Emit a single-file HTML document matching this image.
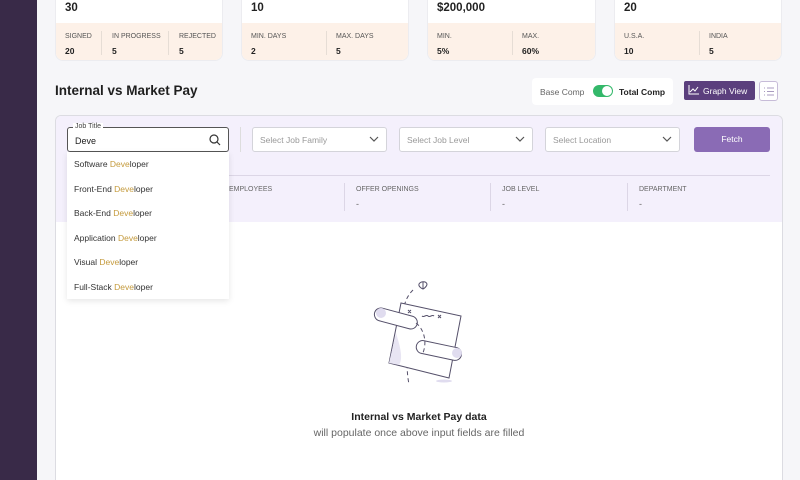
<!DOCTYPE html>
<html style="width:800px;height:480px;overflow:hidden"><head><meta charset="utf-8"><style>
*{box-sizing:border-box;margin:0;padding:0}
body{width:800px;height:480px;overflow:hidden;background:#f6f6f9;font-family:"Liberation Sans",sans-serif;color:#222;position:relative}
.abs{position:absolute}
.side{left:0;top:0;width:37px;height:480px;background:#392a48}
.card{background:#fff;border:1px solid #ececf0;border-top:none;border-radius:0 0 8px 8px;overflow:hidden;top:-10px;height:71px}
.card .v{position:absolute;left:9px;top:12px;font-size:11.5px;font-weight:bold;color:#222}
.card .b{position:absolute;left:0;right:0;top:33px;bottom:0;background:#fdf1e8}
.card .c{position:absolute;top:10px;font-size:7px;color:#555}
.card .c b{display:block;font-size:8.5px;color:#222;margin-top:6px}
.card .s{position:absolute;top:8px;width:1px;height:24px;background:#e6ddd5}
.h{left:55px;top:83px;font-size:13.5px;font-weight:bold;color:#1f1f1f}
.sel{background:#fff;border:1px solid #d4d4da;border-radius:3px;height:25px;top:127px;font-size:8.5px;color:#999;padding:7px 7px}
.sel svg{position:absolute;right:7px;top:8px}
.lab{font-size:7px;color:#666}
.lab b{display:block;font-weight:normal;color:#666;font-size:9px;margin-top:6px}
.dd div{height:24.6px;padding-left:7px;font-size:8.5px;color:#333;line-height:24px}
.dd span{color:#c49a3c}
</style></head><body>
<div class="abs side"></div>
<div class="abs card" style="left:55px;width:168px"><div class="v">30</div><div class="b">
<div class="c" style="left:9px">SIGNED<b>20</b></div><div class="s" style="left:45px"></div>
<div class="c" style="left:56px">IN PROGRESS<b>5</b></div><div class="s" style="left:112px"></div>
<div class="c" style="left:123px">REJECTED<b>5</b></div></div></div>
<div class="abs card" style="left:241px;width:168px"><div class="v">10</div><div class="b">
<div class="c" style="left:9px">MIN. DAYS<b>2</b></div><div class="s" style="left:84px"></div>
<div class="c" style="left:94px">MAX. DAYS<b>5</b></div></div></div>
<div class="abs card" style="left:427px;width:169px"><div class="v">$200,000</div><div class="b">
<div class="c" style="left:9px">MIN.<b>5%</b></div><div class="s" style="left:84px"></div>
<div class="c" style="left:94px">MAX.<b>60%</b></div></div></div>
<div class="abs card" style="left:614px;width:168px"><div class="v">20</div><div class="b">
<div class="c" style="left:9px">U.S.A.<b>10</b></div><div class="s" style="left:84px"></div>
<div class="c" style="left:94px">INDIA<b>5</b></div></div></div>

<div class="abs h">Internal vs Market Pay</div>
<div class="abs" style="left:532px;top:78px;width:141px;height:27px;background:#fff;border-radius:4px"></div>
<div class="abs" style="left:540px;top:87px;font-size:8.5px;color:#666">Base Comp</div>
<div class="abs" style="left:593px;top:85px;width:20px;height:12px;border-radius:6px;background:#34b86a"><div style="position:absolute;right:1px;top:1px;width:10px;height:10px;border-radius:5px;background:#fff"></div></div>
<div class="abs" style="left:619px;top:87px;font-size:8.5px;color:#222;font-weight:bold">Total Comp</div>
<div class="abs" style="left:684px;top:81px;width:71px;height:19px;background:#5b3f7d;border-radius:2px;color:#fff;font-size:8.5px;padding:5px 0 0 19px">Graph View
<svg class="abs" style="left:4px;top:4px" width="11" height="10" viewBox="0 0 11 10" fill="none" stroke="#fff" stroke-width="1"><path d="M1 0V9H11M2 7L5 4L7 6L10 2"/></svg></div>
<div class="abs" style="left:759px;top:81px;width:19px;height:20px;border:1px solid #c7bcd8;border-radius:3px;background:#fff">
<svg style="position:absolute;left:4px;top:5px" width="10" height="9" viewBox="0 0 10 9" stroke="#a99bc0" stroke-width="1"><path d="M0 1H1M3 1H10M0 4.5H1M3 4.5H10M0 8H1M3 8H10"/></svg></div>

<div class="abs" style="left:55px;top:115px;width:728px;height:365px;background:#fff;border:1px solid #dcdce2;border-bottom:none;border-radius:6px 6px 0 0;overflow:hidden">
<div style="position:absolute;left:0;top:0;right:0;height:106px;background:#f4f0fc"></div>
<div style="position:absolute;left:13px;right:12px;top:59px;height:1px;background:#dcd6e6"></div>
</div>
<div class="abs lab" style="left:229px;top:186px">EMPLOYEES<b></b></div>
<div class="abs" style="left:344px;top:183px;width:1px;height:28px;background:#dcd6e6"></div>
<div class="abs lab" style="left:356px;top:186px">OFFER OPENINGS<b>-</b></div>
<div class="abs" style="left:490px;top:183px;width:1px;height:28px;background:#dcd6e6"></div>
<div class="abs lab" style="left:502px;top:186px">JOB LEVEL<b>-</b></div>
<div class="abs" style="left:627px;top:183px;width:1px;height:28px;background:#dcd6e6"></div>
<div class="abs lab" style="left:639px;top:186px">DEPARTMENT<b>-</b></div>

<div class="abs" style="left:67px;top:127px;width:162px;height:25px;background:#fff;border:1px solid #555;border-radius:3px;font-size:9px;color:#222;padding:8px 7px">Deve
<svg class="abs" style="right:7px;top:6px" width="12" height="12" viewBox="0 0 12 12" fill="none" stroke="#333" stroke-width="1.2"><circle cx="5" cy="5" r="4"/><path d="M8 8L11 11"/></svg></div>
<div class="abs" style="left:73px;top:123px;background:#fff;padding:0 2px;font-size:7px;color:#444">Job Title</div>
<div class="abs" style="left:240px;top:127px;width:1px;height:25px;background:#ddd"></div>
<div class="abs sel" style="left:252px;width:135px">Select Job Family<svg width="10" height="7" viewBox="0 0 10 7" fill="none" stroke="#555" stroke-width="1.2"><path d="M1 1L5 5L9 1"/></svg></div>
<div class="abs sel" style="left:399px;width:134px">Select Job Level<svg width="10" height="7" viewBox="0 0 10 7" fill="none" stroke="#555" stroke-width="1.2"><path d="M1 1L5 5L9 1"/></svg></div>
<div class="abs sel" style="left:545px;width:135px">Select Location<svg width="10" height="7" viewBox="0 0 10 7" fill="none" stroke="#555" stroke-width="1.2"><path d="M1 1L5 5L9 1"/></svg></div>
<div class="abs" style="left:694px;top:127px;width:76px;height:25px;background:#8a6bb5;border-radius:3px;color:#fff;font-size:8.5px;text-align:center;line-height:25px">Fetch</div>

<div class="abs dd" style="left:67px;top:152px;width:162px;height:147px;background:#fff;box-shadow:0 2px 6px rgba(0,0,0,.1)">
<div>Software <span>Deve</span>loper</div><div>Front-End <span>Deve</span>loper</div><div>Back-End <span>Deve</span>loper</div><div>Application <span>Deve</span>loper</div><div>Visual <span>Deve</span>loper</div><div>Full-Stack <span>Deve</span>loper</div></div>

<svg class="abs" style="left:371px;top:278px" width="100" height="110" viewBox="0 0 100 110" fill="none" stroke="#55506a" stroke-width="1">
<path d="M48 6c2-3 7-3 8 0c0 3-4 5-4 5c0 0-5-2-4-5z M52 4v7"/>
<path d="M42 12c-8 8-12 20-8 36c4 18 0 40 4 58" stroke-dasharray="4 3"/>
<path d="M30 25L90 38L78 100L18 85Z" fill="#fff"/>
<path d="M18 85L25 55c3 10 8 25 3 32z" fill="#e8e5f3" stroke="none"/>
<rect x="3" y="34" width="44" height="13" rx="6.5" transform="rotate(15 25 40)" fill="#fff"/>
<ellipse cx="10" cy="35" rx="5" ry="5" fill="#e0dcef" stroke="none"/>
<rect x="45" y="66" width="46" height="13" rx="6.5" transform="rotate(12 68 72)" fill="#fff"/>
<ellipse cx="86" cy="75" rx="5" ry="5" fill="#e0dcef" stroke="none"/>
<path d="M45 45c8 6 12 20 6 32" stroke-dasharray="4 3"/>
<path d="M37 32l3 3M40 32l-3 3M67 37l3 3M70 37l-3 3M51 38c2 2 4-2 6 0s4-2 6 0"/>
<ellipse cx="73" cy="103" rx="8" ry="1.5" fill="#e0dcef" stroke="none"/>
</svg>
<div class="abs" style="left:0;width:838px;top:411px;text-align:center;font-size:10.5px;font-weight:bold;color:#222">Internal vs Market Pay data</div>
<div class="abs" style="left:0;width:838px;top:427px;text-align:center;font-size:10.5px;color:#666">will populate once above input fields are filled</div>
</body></html>
